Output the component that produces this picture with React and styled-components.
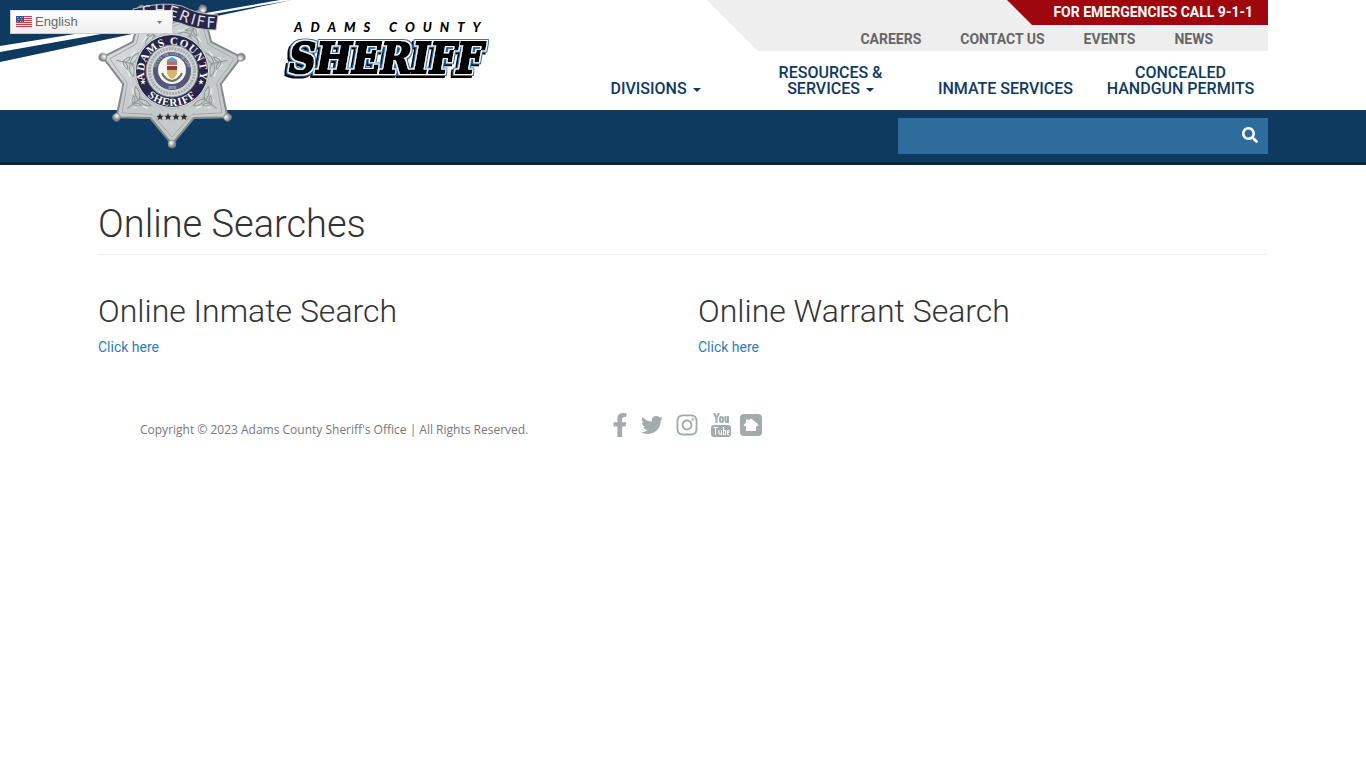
import React, { useId, useState } from 'react'
import styled, { createGlobalStyle } from 'styled-components'
import { FaFacebookF, FaTwitter, FaInstagram, FaSearch } from 'react-icons/fa'

const GlobalStyle = createGlobalStyle`
  * {
    box-sizing: border-box;
  }
  body {
    margin: 0;
    background: #fff;
    color: #333;
    font-family: Roboto, "Open Sans", sans-serif;
    font-size: 14px;
    line-height: 20px;
  }
`

const Container = styled.div`
  position: relative;
  max-width: 1200px;
  margin: 0 auto;
  padding: 0 15px;
`

const Header = styled.header`
  position: relative;
`

const Top = styled.div`
  position: relative;
  min-height: 110px;
`

const Swoosh = styled.svg`
  position: absolute;
  top: 0;
  left: 0;
`

const TopRow = styled.div`
  display: flex;
  justify-content: space-between;
`

const Brand = styled.a`
  display: block;
  padding: 14px 0 0 182px;
`

const Badge = styled.svg`
  position: absolute;
  z-index: 2;
  top: 0;
  left: 15px;
`

const Menus = styled.div`
  width: 700px;
`

const Utility = styled.div`
  height: 51px;
  width: 561px;
  margin-left: auto;
  background: #eee;
  clip-path: polygon(0 0, 100% 0, 100% 100%, 51px 100%);
`

const Emergency = styled.div`
  height: 25px;
  width: 261px;
  margin-left: auto;
  padding-right: 15px;
  background: #9e070d;
  clip-path: polygon(0 0, 100% 0, 100% 100%, 25px 100%);
  color: #fff;
  font-size: 14px;
  font-weight: 700;
  line-height: 24px;
  text-align: right;
`

const UtilityLinks = styled.nav`
  display: flex;
  justify-content: flex-end;
  gap: 39px;
  padding: 4px 55px 0 0;
`

const UtilityLink = styled.a`
  color: #666;
  font-size: 14px;
  font-weight: 700;
  text-decoration: none;
`

const MainNav = styled.nav`
  display: grid;
  grid-template-columns: repeat(4, 1fr);
  align-items: end;
  padding-top: 14px;
`

const NavLink = styled.a`
  color: #0f3a5f;
  font-size: 16px;
  font-weight: 500;
  line-height: 16px;
  text-align: center;
  text-decoration: none;
`

const Caret = styled.span`
  display: inline-block;
  margin-left: 2px;
  vertical-align: middle;
  border-top: 4px solid;
  border-left: 4px solid transparent;
  border-right: 4px solid transparent;
`

const Bar = styled.div`
  height: 55px;
  padding-top: 8px;
  background: #0f3a5f;
  border-bottom: 3px solid #0b2740;
`

const SearchForm = styled.form`
  display: flex;
  width: 370px;
  height: 36px;
  margin-left: auto;
  background: #2e6c9e;
`

const SearchInput = styled.input`
  flex: 1;
  min-width: 0;
  padding: 6px 12px;
  border: 0;
  background: transparent;
  color: #fff;
  font: inherit;
`

const SearchButton = styled.button`
  display: flex;
  align-items: center;
  padding: 0 10px 2px;
  border: 0;
  background: transparent;
  color: #fff;
  font-size: 16px;
  cursor: pointer;
`

const Language = styled.div`
  position: absolute;
  z-index: 3;
  top: 10px;
  left: 10px;
  width: 163px;
  height: 24px;
  border: 1px solid #ccc;
  border-top-color: #e6e6e6;
  background: linear-gradient(#fff, #efefef);

  svg {
    position: absolute;
    top: 5px;
    left: 5px;
    pointer-events: none;
  }

  svg + svg {
    top: 10px;
    left: 145px;
  }
`

const LanguageSelect = styled.select`
  appearance: none;
  display: block;
  width: 100%;
  height: 20px;
  padding: 0 24px;
  border: 0;
  background: transparent;
  color: #666;
  font-family: "Liberation Sans", Arial, sans-serif;
  font-size: 13px;
  cursor: pointer;
`

const Title = styled.h1`
  margin: 37px 0 30px;
  padding-bottom: 8px;
  border-bottom: 1px solid #eee;
  font-size: 38px;
  font-weight: 300;
  line-height: 44px;
`

const Columns = styled.div`
  display: grid;
  grid-template-columns: 1fr 1fr;
  gap: 30px;
`

const SubTitle = styled.h2`
  margin: 9px 0;
  font-size: 32px;
  font-weight: 300;
  line-height: 34px;
`

const TextLink = styled.a`
  color: #337ab7;
  font-size: 14px;
  text-decoration: none;
`

const Footer = styled.footer`
  display: flex;
  padding: 56px 0 0 42px;
`

const Copyright = styled.p`
  flex: 0 0 468px;
  margin: 7px 0 0;
  color: #777;
  font-family: "Open Sans", sans-serif;
  font-size: 12px;
`

const Social = styled.div`
  display: flex;
  align-items: center;
  height: 24px;
  color: #a3abad;
`

const SocialLink = styled.a`
  display: flex;
  margin-right: ${(props) => props.$gap || 0}px;
  color: inherit;
`

const utilityLinks = ['CAREERS', 'CONTACT US', 'EVENTS', 'NEWS']

// seven points, the first one straight down
const starPoints = (outer, inner) =>
  Array.from({ length: 14 }, (_, i) => {
    const angle = Math.PI / 2 + (i * Math.PI) / 7
    const r = i % 2 ? inner : outer
    return `${(74 + r * Math.cos(angle)).toFixed(1)},${(73 + r * Math.sin(angle)).toFixed(1)}`
  }).join(' ')

const SmallStar = ({ x, y, size = 4, fill }) => (
  <polygon
    transform={`translate(${x} ${y}) scale(${size})`}
    points="0,-1 .25,-.3 .95,-.3 .4,.12 .6,.8 0,.4 -.6,.8 -.4,.12 -.95,-.3 -.25,-.3"
    fill={fill}
  />
)

const SheriffBadge = () => (
  <Badge width="150" height="152" viewBox="0 0 150 152" role="img" aria-label="Adams County Sheriff badge">
    <defs>
      <linearGradient id="silver" x1="0" y1="0" x2="1" y2="1">
        <stop offset="0" stopColor="#e3e6e6" />
        <stop offset=".5" stopColor="#c3c8c9" />
        <stop offset="1" stopColor="#c9cdce" />
      </linearGradient>
      <radialGradient id="ball" cx=".4" cy=".35">
        <stop offset="0" stopColor="#fff" />
        <stop offset="1" stopColor="#85898a" />
      </radialGradient>
      <path id="arcTop" d="M46.500 78 A28 28 0 1 1 101.500 78" />
      <path id="arcBottom" d="M39 71 A35 35 0 0 0 109 71" />
      <path id="arcState" d="M58 71 A16 16 0 0 1 90 71" />
      <path id="ribbon" d="M22 22 Q65 11 80 19 Q98 28 119 28" />
    </defs>
    <polygon points={starPoints(71, 50)} fill="url(#silver)" stroke="#858b8c" strokeWidth="2" strokeLinejoin="round" />
    <polygon points={starPoints(64, 46)} fill="none" stroke="#a3a9aa" strokeWidth="1" />
    {[0, 1, 2, 3, 4, 5, 6].map((n) => (
      <g key={n} transform={`rotate(${(n * 360) / 7} 74 73)`} fill="none">
        {n !== 0 && (
          <>
            <path d="M71 124 q-3 -3 -2 -6 M77 124 q3 -3 2 -6 M66 117 q-2 -3 -5 -3 M82 117 q2 -3 5 -3" stroke="#f4f6f6" strokeWidth="1" />
            <path d="M74 130 V112 M74 123 q-5 -1 -6 -6 q5 1 6 5 q1 -4 6 -5 q-1 5 -6 6 M74 116 q-9 0 -12 -6 q8 -1 12 5 q4 -6 12 -5 q-3 6 -12 6" stroke="#8d9495" strokeWidth="1" />
          </>
        )}
        <circle cx="74" cy="144" r="4" fill="url(#ball)" stroke="#777c7d" strokeWidth=".5" />
      </g>
    ))}
    <circle cx="74" cy="71" r="38" fill="#b5bbbc" />
    <circle cx="74" cy="71" r="36.500" fill="#29264a" stroke="#e4e7e8" strokeWidth="1" />
    <circle cx="74" cy="71" r="26" fill="#d3d7d8" stroke="#8c9293" />
    <circle cx="74" cy="71" r="22.500" fill="none" stroke="#a4abac" strokeWidth="3" strokeDasharray="2 1" />
    <circle cx="74" cy="71" r="19.500" fill="#555878" stroke="#d9dddd" strokeWidth="1" />
    <circle cx="74" cy="70" r="14" fill="#f6f6f3" />
    <path d="M69 60 l5 -3 5 3 v2 h-10 z" fill="#5e9fca" />
    <path d="M69 62 h10 v3 h-10 z" fill="#cb6b4b" />
    <path d="M69 66 h10 v7 q-1 4 -5 6 q-4 -2 -5 -6 z" fill="#d7b760" />
    <path d="M69 66 h10 v4 h-10 z" fill="#8d3947" />
    <path d="M64 73 q3 7 10 8 q7 -1 10 -8" fill="none" stroke="#6c756a" strokeWidth="2" />
    <g fill="#fff" fontFamily="Liberation Serif, serif" fontWeight="700" textAnchor="middle">
      <text fontSize="11" letterSpacing="1">
        <textPath href="#arcTop" startOffset="50%">ADAMS COUNTY</textPath>
      </text>
      <text fontSize="11" letterSpacing="1">
        <textPath href="#arcBottom" startOffset="50%">SHERIFF</textPath>
      </text>
      <text fontSize="4" fill="#c3c6d3">
        <textPath href="#arcState" startOffset="50%">STATE OF COLORADO</textPath>
      </text>
      <text x="74" y="89" fontSize="4" fill="#c3c6d3">1876</text>
    </g>
    <SmallStar x="45" y="82" size={3} fill="#fff" />
    <SmallStar x="103" y="82" size={3} fill="#fff" />
    {[62, 70, 78, 86].map((x) => (
      <SmallStar key={x} x={x} y={117} fill="#29282f" />
    ))}
    <path d="M35 9 Q66 1 84 6 Q98 14 120 15 L118 30 Q98 30 82 23 Q66 18 37 24 Z" fill="#29264a" stroke="#b7bcbd" strokeWidth="1" />
    <text fontFamily="DejaVu Sans, sans-serif" fontSize="15" letterSpacing="2" fill="#dfe1ea" textAnchor="end">
      <textPath href="#ribbon" startOffset="100%">SHERIFF</textPath>
    </text>
  </Badge>
)

const Wordmark = () => (
  <svg width="215" height="80" viewBox="0 0 215 80" role="img" aria-label="Adams County Sheriff">
    <defs>
      {/* white, then blue outline, then the solid shadow down-left */}
      <filter id="outline" x="-10%" y="-20%" width="120%" height="140%">
        <feMorphology in="SourceAlpha" operator="dilate" radius="1" result="fat" />
        <feMorphology in="SourceAlpha" operator="dilate" radius="2" result="fatter" />
        <feFlood floodColor="#fff" />
        <feComposite in2="fat" operator="in" result="white" />
        <feFlood floodColor="#2a78b5" />
        <feComposite in2="fatter" operator="in" result="blue" />
        <feOffset in="fatter" dx="-2" dy="2" result="shadow" />
        <feMerge>
          <feMergeNode in="shadow" />
          <feMergeNode in="blue" />
          <feMergeNode in="white" />
          <feMergeNode in="SourceGraphic" />
        </feMerge>
      </filter>
    </defs>
    <text x="14" y="18" fontFamily="Lato, sans-serif" fontWeight="900" fontStyle="italic" fontSize="13" letterSpacing="8">
      ADAMS COUNTY
    </text>
    <text
      x="9"
      y="59"
      fontFamily="DejaVu Serif Condensed, DejaVu Serif, serif"
      fontWeight="700"
      fontStyle="italic"
      fontSize="42"
      stroke="#000"
      strokeWidth="2"
      filter="url(#outline)"
    >
      SHERIFF
    </text>
  </svg>
)

const UsFlag = () => (
  <svg width="16" height="12" viewBox="0 0 16 12" aria-hidden="true">
    <rect width="16" height="12" fill="#f5e9e9" />
    {[0, 2, 4, 6, 8, 10].map((y) => (
      <rect key={y} y={y} width="16" height="1" fill="#c8404b" />
    ))}
    <rect width="8" height="6" fill="#3a4f92" />
    <path d="M1 1h1M4 1h1M6 1h1M2 3h1M5 3h1M1 5h1M4 5h1M6 5h1" transform="translate(0 .5)" stroke="#b9c3e2" strokeWidth="1" />
  </svg>
)

const YoutubeIcon = () => (
  <svg width="20" height="24" viewBox="0 0 20 24" fill="none" stroke="#a3abad" strokeWidth="2">
    <path d="M3 0 L5.500 5 V10 M8 0 L5.500 5" />
    <rect x="9" y="4" width="3" height="5" rx="1.500" />
    <path d="M14.500 3 V8 Q14.500 9 16 9 L17 8 M17 3 V10" />
    <rect x="1" y="13" width="18" height="10" rx="2" fill="#a3abad" />
    <path d="M2.500 14.500 H7 M4.500 14.500 V22 M8 17 V21 H10.500 M10.500 17 V22 M12.500 14 V21.500 H14.500 V17.500 H13 M18 21.500 H16.500 V17.500 H18 V19.500 H16.500" stroke="#fff" strokeWidth="1" />
  </svg>
)

const NextdoorIcon = () => (
  <svg width="22" height="22" viewBox="0 0 22 22">
    <rect width="22" height="22" rx="4" fill="#a3abad" />
    <path d="M3.500 11 L6 8.500 V5.500 H8.500 V6.500 L11 4.500 L18.500 10.500 L17 12.500 L16 12 V17 H6 V12 L5 12.500 Z" fill="#fff" />
  </svg>
)

export default function App() {
  const [lang, setLang] = useState('en')
  const langId = useId()

  return (
    <>
      <GlobalStyle />
      <Header>
        <Language>
          <LanguageSelect
            id={langId}
            aria-label="Language"
            value={lang}
            onChange={(e) => setLang(e.target.value)}
          >
            <option value="en">English</option>
          </LanguageSelect>
          <UsFlag />
          <svg width="7" height="4" viewBox="0 0 7 4" aria-hidden="true">
            <path d="M1 0 H6 L3.500 3 Z" fill="#777" />
          </svg>
        </Language>

        <Top>
          <Swoosh width="294" height="64" viewBox="0 0 294 64" aria-hidden="true">
            <path d="M0 0 H280 L200 14 L0 46 Z" fill="#0f3a5f" />
            <path d="M0 52 L292 0 L0 62 Z" fill="#0f3a5f" />
          </Swoosh>
          <Container>
            <SheriffBadge />
            <TopRow>
              <Brand href="#">
                <Wordmark />
              </Brand>
              <Menus>
                <Utility>
                  <Emergency>FOR EMERGENCIES CALL 9-1-1</Emergency>
                  <UtilityLinks>
                    {utilityLinks.map((label) => (
                      <UtilityLink key={label} href="#">{label}</UtilityLink>
                    ))}
                  </UtilityLinks>
                </Utility>
                <MainNav>
                  <NavLink href="#">DIVISIONS <Caret /></NavLink>
                  <NavLink href="#">RESOURCES &amp;<br />SERVICES <Caret /></NavLink>
                  <NavLink href="#">INMATE SERVICES</NavLink>
                  <NavLink href="#">CONCEALED<br />HANDGUN PERMITS</NavLink>
                </MainNav>
              </Menus>
            </TopRow>
          </Container>
        </Top>

        <Bar>
          <Container>
            <SearchForm onSubmit={(e) => e.preventDefault()}>
              <SearchInput type="text" aria-label="Search" />
              <SearchButton type="submit" aria-label="Search">
                <FaSearch />
              </SearchButton>
            </SearchForm>
          </Container>
        </Bar>
      </Header>

      <Container>
        <main>
          <Title>Online Searches</Title>
          <Columns>
            <section>
              <SubTitle>Online Inmate Search</SubTitle>
              <TextLink href="#">Click here</TextLink>
            </section>
            <section>
              <SubTitle>Online Warrant Search</SubTitle>
              <TextLink href="#">Click here</TextLink>
            </section>
          </Columns>
        </main>
        <Footer>
          <Copyright>Copyright © 2023 Adams County Sheriff's Office | All Rights Reserved.</Copyright>
          <Social>
            <SocialLink href="#" aria-label="Facebook" $gap={9}><FaFacebookF size={24} /></SocialLink>
            <SocialLink href="#" aria-label="Twitter" $gap={12}><FaTwitter size={22} /></SocialLink>
            <SocialLink href="#" aria-label="Instagram" $gap={12}><FaInstagram size={24} /></SocialLink>
            <SocialLink href="#" aria-label="YouTube" $gap={9}><YoutubeIcon /></SocialLink>
            <SocialLink href="#" aria-label="Nextdoor"><NextdoorIcon /></SocialLink>
          </Social>
        </Footer>
      </Container>
    </>
  )
}
